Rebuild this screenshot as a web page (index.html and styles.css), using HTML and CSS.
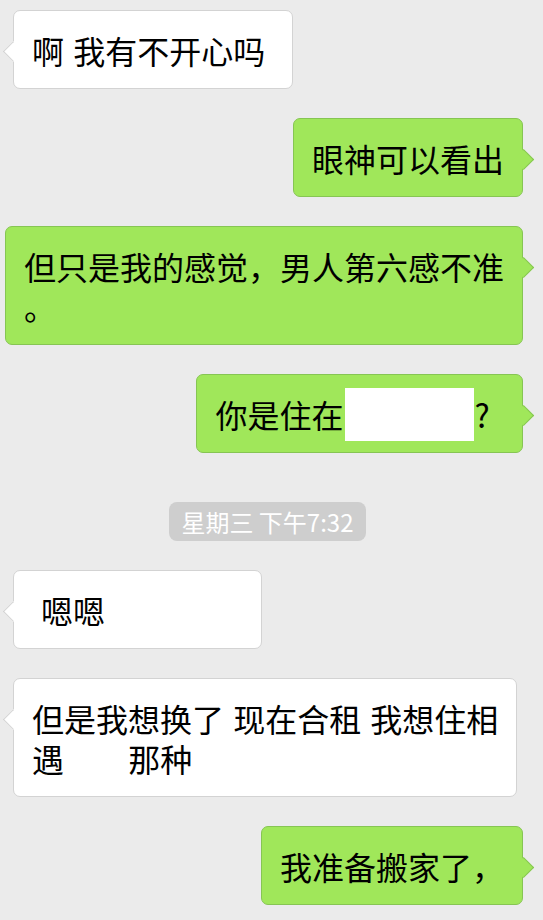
FILE: index.html
```html
<!DOCTYPE html>
<html lang="zh-CN">
<head>
  <meta charset="UTF-8" />
  <meta name="viewport" content="width=device-width, initial-scale=1.0"/>
  <title>聊天</title>
  <link rel="stylesheet" href="styles.css">
</head>
<body>
  <div class="chat">
    <div class="row left">
      <div class="bubble white">啊 我有不开心吗&nbsp;</div>
    </div>

    <div class="row right">
      <div class="bubble green">眼神可以看出</div>
    </div>

    <div class="row right">
      <div class="bubble green">但只是我的感觉，男人第六感不准<br>。</div>
    </div>

    <div class="row right">
      <div class="bubble green">你是住在<span class="redact"></span>?&nbsp;&nbsp;</div>
    </div>

    <div class="time">
      <span>星期三 下午7:32</span>
    </div>

    <div class="row left">
      <div class="bubble white short">嗯嗯</div>
    </div>

    <div class="row left">
      <div class="bubble white">但是我想换了 现在合租 我想住相<br>遇&nbsp;&nbsp;&nbsp;&nbsp;&nbsp;&nbsp;&nbsp;那种</div>
    </div>

    <div class="row right">
      <div class="bubble green">我准备搬家了，</div>
    </div>
  </div>
</body>
</html>
```

FILE: styles.css
```css
body {
  margin: 0;
  background: #ebebeb;
  font-family: "Noto Sans CJK SC", "Noto Sans", sans-serif;
  color: #000;
}

.chat {
  display: flex;
  flex-direction: column;
  gap: 29px;
  padding: 10px 0 20px;
}

.row {
  display: flex;
}

.row.left {
  justify-content: flex-start;
  padding-left: 13px;
}

.row.right {
  justify-content: flex-end;
  padding-right: 20px;
}

.bubble {
  position: relative;
  max-width: 520px;
  padding: 18.5px 18px;
  font-size: 32px;
  line-height: 40px;
  border-radius: 7px;
  border: 1px solid;
}

.bubble::before {
  content: "";
  position: absolute;
  top: 32.5px;
  width: 13px;
  height: 13px;
  transform: rotate(45deg);
  border: 1px solid transparent;
}

.white {
  background: #fff;
  border-color: #d3d3d3;
  word-spacing: 2px;
}

.white::before {
  left: -8.5px;
  background: #fff;
  border-left-color: #d3d3d3;
  border-bottom-color: #d3d3d3;
}

.green {
  background: #a0e75a;
  border-color: #86c553;
}

.green::before {
  right: -8.5px;
  background: #a0e75a;
  border-top-color: #86c553;
  border-right-color: #86c553;
}

.short {
  width: 209px;
  padding-left: 27px;
  padding-right: 11px;
}

.redact {
  display: inline-block;
  width: 129px;
  height: 53px;
  margin: -5.5px 0 -7.5px 2px;
  vertical-align: top;
  background: #fff;
}

.time {
  display: flex;
  justify-content: center;
  margin-top: 20px;
  padding-right: 8px;
}

.time span {
  padding: 0 12px;
  height: 39px;
  line-height: 39px;
  font-size: 24px;
  color: #fff;
  background: #cecece;
  border-radius: 8px;
}
```
